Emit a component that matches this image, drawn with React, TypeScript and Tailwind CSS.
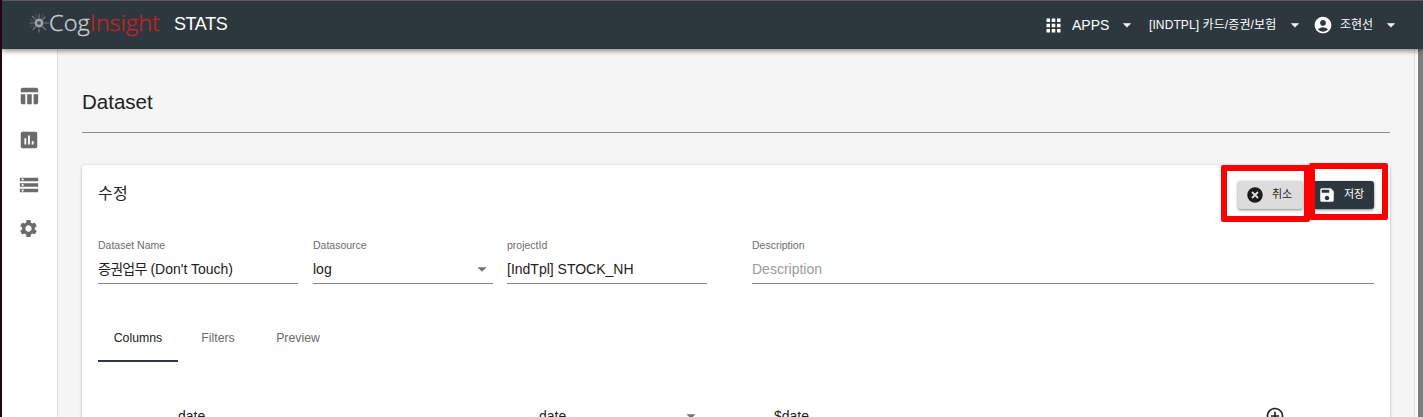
import type { ReactNode } from "react";
import {
  MdAccountCircle,
  MdAddCircleOutline,
  MdApps,
  MdArrowDropDown,
  MdInsertChart,
  MdSave,
  MdSettings,
  MdStorage,
  MdTableChart,
} from "react-icons/md";

function Logo() {
  return (
    <svg className="h-11 w-[134px] shrink-0" viewBox="0 0 134 44">
      <g transform="translate(-0.5 9)">
        <path
          d="M10.500 2v3.500M10.500 17v3M1.500 11h3.500M16 11h4M4 4.500l2.800 2.600M16.500 5l-2.500 2.200M4.500 17.500l2.500-2.600M17 17.500l-3-2.700"
          stroke="#6f797e"
          strokeWidth="1.200"
          strokeLinecap="round"
        />
        <path
          d="M6.800 2l1.200 3M14.300 2.500l-1.200 2.700M2.200 7.500l2.600 1.200M2.300 14.500l2.500-1.100"
          stroke="#4f5a60"
          strokeLinecap="round"
        />
        <circle cx="10.500" cy="11" r="3.300" fill="#596166" stroke="#9da3a7" strokeWidth="2.400" />
        <circle cx="10.500" cy="11" r="1.200" fill="#3b464c" />
      </g>
      <text
        x="20"
        y="27.500"
        fontSize="22.500"
        fontFamily="'Open Sans', 'Noto Sans', sans-serif"
        fontWeight="300"
        textLength="111"
        lengthAdjust="spacingAndGlyphs"
        strokeWidth="0.35"
      >
        <tspan fill="#c9ced1" stroke="#c9ced1">Cog</tspan>
        <tspan fill="#c4222b" stroke="#c4222b">Insight</tspan>
      </text>
    </svg>
  );
}

function CancelIcon() {
  return (
    <svg className="size-[18px]" viewBox="0 0 24 24">
      <circle cx="12" cy="12" r="10.300" fill="#1c1c1c" />
      <path d="M8 8l8 8M16 8l-8 8" stroke="#dcdcdc" strokeWidth="2.500" />
    </svg>
  );
}

function Field({ label, width, children, muted, select }: { label: string; width: string; children: ReactNode; muted?: boolean; select?: boolean }) {
  return (
    <div className={`flex h-[45px] flex-col border-b border-[#858585] ${width}`}>
      <span className="text-[10.5px] leading-3 text-[#6d6d6d]">{label}</span>
      <div className="mt-2 flex h-5 items-center justify-between">
        <span className={`text-[14px] leading-5 ${muted ? "text-[#9b9b9b]" : "text-[#212121]"}`}>{children}</span>
        {select && <MdArrowDropDown className="size-[22px] text-[#757575]" />}
      </div>
    </div>
  );
}

export default function App() {
  return (
    <div className="flex h-[417px] w-[1423px] flex-col overflow-hidden border-l-2 border-[#1c0713] bg-[#f5f5f5] font-['Liberation_Sans','Noto_Sans_CJK_KR',sans-serif] text-[#212121]">
      <header className="relative z-10 flex h-[49px] shrink-0 items-center border-t border-[#5a5a5c] bg-[#2d383e] pl-[27px] text-white shadow-[0_2px_5px_rgba(0,0,0,0.45)]">
        <Logo />
        <span className="ml-[11px] pb-px text-[18px] tracking-[-0.4px]">STATS</span>
        <div className="ml-auto flex items-center">
          <MdApps className="size-[21px]" />
          <span className="ml-2 w-[38px] text-[14px]">APPS</span>
          <MdArrowDropDown className="ml-[7px] size-5" />
          <span className="ml-3 w-[128px] whitespace-nowrap text-[12px] tracking-[0.1px]">[INDTPL] 카드/증권/보험</span>
          <MdArrowDropDown className="ml-2 size-5" />
          <MdAccountCircle className="ml-2 size-5" />
          <span className="ml-[7px] w-[33px] whitespace-nowrap text-[12px]">조현선</span>
          <MdArrowDropDown className="mr-[22px] ml-2 size-5" />
        </div>
      </header>
      <div className="flex min-h-0 flex-1">
        <nav className="flex w-14 shrink-0 flex-col items-center gap-[22.5px] border-r border-[#dcdcdc] bg-white pt-[35.5px] pr-[2px] text-[#6b6b6b]">
          <MdTableChart className="size-[22px]" />
          <MdInsertChart className="size-[22px]" />
          <MdStorage className="size-[22px]" />
          <MdSettings className="size-[21px]" />
        </nav>
        <main className="flex min-w-0 flex-1 flex-col pl-6">
          <h1 className="h-[84px] w-[1308px] shrink-0 border-b border-[#8c8c8c] pt-10 text-[20.5px] leading-[26px]">Dataset</h1>
          <section className="mt-8 h-[270px] w-[1308px] shrink-0 rounded-t bg-white px-4 shadow-[0_1px_3px_rgba(0,0,0,0.3)]">
            <div className="flex h-[74px] items-start justify-between pt-4">
              <h2 className="pt-px text-[16px] leading-6 tracking-[0.3px]">수정</h2>
              <div className="relative flex gap-2">
                <button className="flex h-7 w-[65px] items-center gap-2 rounded-[3px] bg-[#dcdcdc] pl-2 text-[11px] shadow-[0_1px_3px_rgba(0,0,0,0.5)]">
                  <CancelIcon />
                  <span className="pb-0.5">취소</span>
                </button>
                <button className="flex h-7 w-[63px] items-center gap-2 rounded-[3px] bg-[#2d383e] pl-[7px] text-[11px] text-white shadow-[0_1px_3px_rgba(0,0,0,0.5)]">
                  <MdSave className="size-[18px]" />
                  <span className="pb-0.5">저장</span>
                </button>
                <div className="absolute top-[-16px] left-[-17px] h-[57px] w-[89px] rounded-[2px] border-6 border-[#ff0000]" />
                <div className="absolute top-[-18px] left-[71px] h-[57px] w-[79px] rounded-[2px] border-6 border-[#ff0000]" />
              </div>
            </div>
            <div className="flex">
              <Field label="Dataset Name" width="w-[200px]">
                <span className="tracking-[-0.75px]">증권업무</span> (Don't Touch)
              </Field>
              <Field label="Datasource" width="ml-[15px] w-[180px]" select>log</Field>
              <Field label="projectId" width="ml-3.5 w-[200px]">[IndTpl] STOCK_NH</Field>
              <Field label="Description" width="ml-[45px] flex-1" muted>Description</Field>
            </div>
            <div className="mt-[30px] flex h-12 text-[12.3px] text-[#6b6b6b]">
              <div className="flex w-20 items-center justify-center border-b-2 border-[#2d383e] pt-0.5 text-[#212121]">Columns</div>
              <div className="flex w-20 items-center justify-center">Filters</div>
              <div className="flex w-20 items-center justify-center">Preview</div>
            </div>
            <div className="mt-[43px] flex items-center pl-20 text-[14px] leading-[22px]">
              <span className="w-[361px]">date</span>
              <span className="w-[141px]">date</span>
              <MdArrowDropDown className="size-[22px] text-[#757575]" />
              <span className="ml-[72px]">$date</span>
              <MdAddCircleOutline className="mr-[89px] ml-auto size-5" />
            </div>
          </section>
        </main>
        <div className="w-1 shrink-0 border-l border-[#dcdcdc] bg-[#fafafa]" />
        <div className="w-[5px] shrink-0 bg-[#7d7d7d]" />
      </div>
    </div>
  );
}
